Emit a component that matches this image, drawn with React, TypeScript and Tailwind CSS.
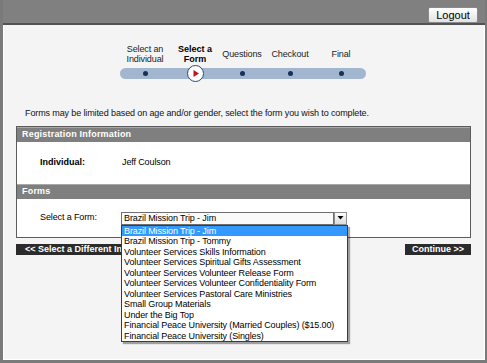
import React from "react";

const items = [
  "Brazil Mission Trip - Jim",
  "Brazil Mission Trip - Tommy",
  "Volunteer Services Skills Information",
  "Volunteer Services Spiritual Gifts Assessment",
  "Volunteer Services Volunteer Release Form",
  "Volunteer Services Volunteer Confidentiality Form",
  "Volunteer Services Pastoral Care Ministries",
  "Small Group Materials",
  "Under the Big Top",
  "Financial Peace University (Married Couples) ($15.00)",
  "Financial Peace University (Singles)",
];

const cols = ["w-[50px]", "w-[50px]", "w-[44px]", "w-[52px]", "w-[50px]"];

export default function App() {
  return (
    <div className="w-[487px] h-[363px] bg-[#7a7a7a] pl-[3px] pr-[2px] pb-[3px] overflow-hidden font-['Liberation_Sans',Arial,sans-serif] text-[9px] tracking-[-0.12px] text-black">
      <div className="h-full flex flex-col">
        {/* header */}
        <div className="h-[25px] shrink-0 bg-[#808080] border-b-2 border-[#525252] flex justify-end items-start pt-[7px] pr-[7px]">
          <button className="h-[16px] w-[50px] rounded-[2px] border border-[#8a8a8a] bg-gradient-to-b from-[#ffffff] to-[#e2e2e2] text-[11px] leading-[14px] tracking-normal text-black">
            Logout
          </button>
        </div>

        {/* content */}
        <div className="flex-1 bg-[#f4f4f4] border-l border-r border-b border-white flex flex-col">
          {/* steps */}
          <div className="ml-[116px] mt-[18px] w-[246px] flex flex-col">
            <div className="flex h-[22px] text-[9px] leading-[10.5px] text-[#222]">
              <div className={`${cols[0]} flex items-center justify-center text-center`}>Select an<br />Individual</div>
              <div className={`${cols[1]} flex items-center justify-center text-center font-bold text-black tracking-normal`}>Select a<br />Form</div>
              <div className={`${cols[2]} flex items-center justify-center text-center`}>Questions</div>
              <div className={`${cols[3]} flex items-center justify-center text-center`}>Checkout</div>
              <div className={`${cols[4]} flex items-center justify-center text-center`}>Final</div>
            </div>
            <div className="mt-[3px] h-[11px] rounded-full bg-[#a2b6d0] flex items-center">
              {cols.map((c, i) => (
                <div key={i} className={`${c} flex items-center justify-center`}>
                  {i === 1 ? (
                    <div className="w-[17px] h-[17px] shrink-0 rounded-full bg-white border-[1.5px] border-[#2a4a78] flex items-center justify-center">
                      <svg width="9" height="9" viewBox="0 0 9 9">
                        <polygon points="2.5,1 8,4.5 2.5,8" fill="#c0141c" />
                      </svg>
                    </div>
                  ) : (
                    <div className="w-[5px] h-[5px] rounded-full bg-[#16305c]" />
                  )}
                </div>
              ))}
            </div>
          </div>

          {/* info text */}
          <div className="ml-[21px] mt-[28px] h-[12px] leading-[12px] text-[9px] text-[#111]">
            Forms may be limited based on age and/or gender, select the form you wish to complete.
          </div>

          {/* panel */}
          <div className="ml-[12px] mt-[7px] w-[455px] border border-[#5c5c5c] bg-white">
            <div className="h-[15px] bg-[#7f7f7f] border-t border-[#a8a8a8] pl-[5px] text-white font-bold text-[9px] leading-[13px] tracking-[0.2px]">
              Registration Information
            </div>
            <div className="h-[42px] flex items-center pl-[23px]">
              <div className="w-[82px] font-bold tracking-normal">Individual:</div>
              <div>Jeff Coulson</div>
            </div>
            <div className="h-[15px] bg-[#7f7f7f] border-t border-[#a8a8a8] pl-[5px] text-white font-bold text-[9px] leading-[13px] tracking-[0.2px]">
              Forms
            </div>
            <div className="h-[38px] flex items-center pl-[23px]">
              <div className="w-[81px]">Select a Form:</div>
              <div className="relative flex">
                <div className="w-[213px] h-[13px] border border-[#6e6e6e] bg-[#fafafa] pl-[2px] leading-[11px]">
                  Brazil Mission Trip - Jim
                </div>
                <div className="w-[13px] h-[13px] border border-[#8e8e8e] bg-gradient-to-b from-[#fdfdfd] to-[#dcdcdc] flex items-center justify-center">
                  <svg width="7" height="4" viewBox="0 0 7 4">
                    <polygon points="0.5,0 6.5,0 3.5,3.5" fill="#000" />
                  </svg>
                </div>
                <div className="absolute left-0 top-[13px] z-10 w-[227px] border border-[#3c3c3c] bg-white shadow-[2px_2px_1px_rgba(0,0,0,0.35)]">
                  {items.map((t, i) => (
                    <div
                      key={i}
                      className={`h-[10.5px] leading-[10.5px] pl-[2px] whitespace-nowrap ${i === 0 ? "bg-[#3399ff] text-white" : "text-black"}`}
                    >
                      {t}
                    </div>
                  ))}
                </div>
              </div>
            </div>
          </div>

          {/* buttons */}
          <div className="ml-[12px] mt-[6px] w-[455px] flex justify-between">
            <div className="h-[11px] w-[105px] overflow-hidden bg-[#2b2b2b] text-white font-bold text-[9px] leading-[11px] pl-[9px] whitespace-nowrap tracking-normal">
              &lt;&lt; Select a Different In
            </div>
            <div className="h-[11px] w-[66px] bg-[#2b2b2b] text-white font-bold text-[9px] leading-[11px] text-center whitespace-nowrap tracking-normal">
              Continue &gt;&gt;
            </div>
          </div>
        </div>
      </div>
    </div>
  );
}
